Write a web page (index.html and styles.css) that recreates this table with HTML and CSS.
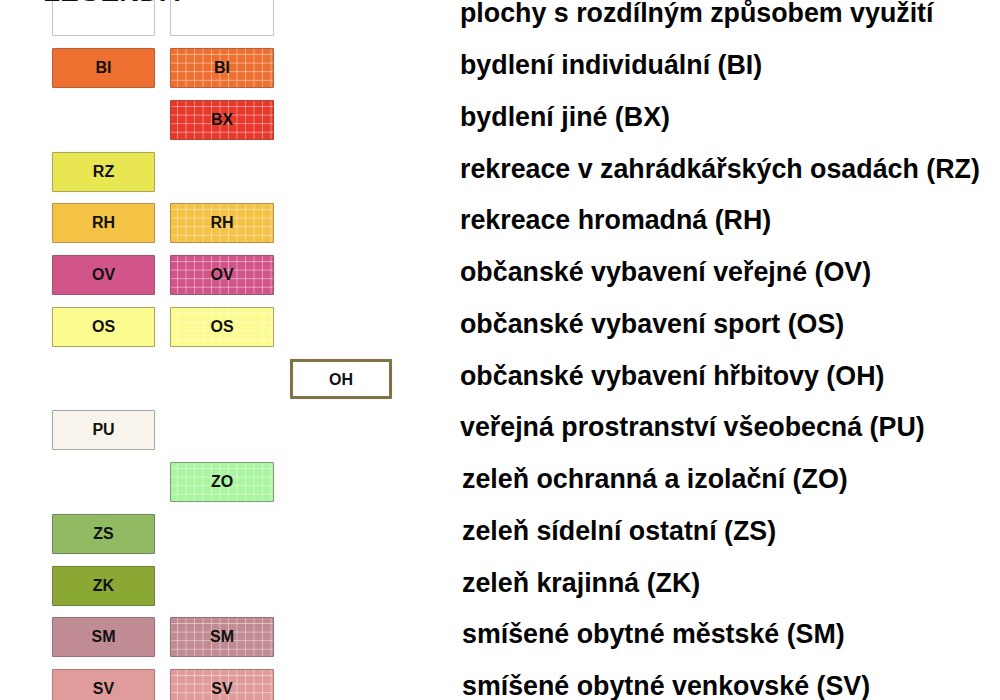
FILE: index.html
```html
<!DOCTYPE html>
<html lang="cs">
<head>
<meta charset="utf-8">
<title>Legenda</title>
<link rel="stylesheet" href="styles.css">
</head>
<body>
<div class="sheet">
  <div class="heading">LEGENDA</div>
  <div class="legend">
    <div class="row">
      <div class="cell"><div class="sw sw-blank"></div></div>
      <div class="cell"><div class="sw sw-blank"></div></div>
      <div class="cell"></div>
      <div class="label">plochy s rozdílným způsobem využití</div>
    </div>
    <div class="row">
      <div class="cell"><div class="sw bi">BI</div></div>
      <div class="cell"><div class="sw bi grid">BI</div></div>
      <div class="cell"></div>
      <div class="label">bydlení individuální (BI)</div>
    </div>
    <div class="row">
      <div class="cell"></div>
      <div class="cell"><div class="sw bx grid">BX</div></div>
      <div class="cell"></div>
      <div class="label">bydlení jiné (BX)</div>
    </div>
    <div class="row">
      <div class="cell"><div class="sw rz">RZ</div></div>
      <div class="cell"></div>
      <div class="cell"></div>
      <div class="label">rekreace v zahrádkářských osadách (RZ)</div>
    </div>
    <div class="row">
      <div class="cell"><div class="sw rh">RH</div></div>
      <div class="cell"><div class="sw rh grid">RH</div></div>
      <div class="cell"></div>
      <div class="label">rekreace hromadná (RH)</div>
    </div>
    <div class="row">
      <div class="cell"><div class="sw ov">OV</div></div>
      <div class="cell"><div class="sw ov grid">OV</div></div>
      <div class="cell"></div>
      <div class="label">občanské vybavení veřejné (OV)</div>
    </div>
    <div class="row">
      <div class="cell"><div class="sw os">OS</div></div>
      <div class="cell"><div class="sw os grid">OS</div></div>
      <div class="cell"></div>
      <div class="label">občanské vybavení sport (OS)</div>
    </div>
    <div class="row">
      <div class="cell"></div>
      <div class="cell"></div>
      <div class="cell"><div class="sw oh">OH</div></div>
      <div class="label">občanské vybavení hřbitovy (OH)</div>
    </div>
    <div class="row">
      <div class="cell"><div class="sw pu">PU</div></div>
      <div class="cell"></div>
      <div class="cell"></div>
      <div class="label">veřejná prostranství všeobecná (PU)</div>
    </div>
    <div class="row">
      <div class="cell"></div>
      <div class="cell"><div class="sw zo grid">ZO</div></div>
      <div class="cell"></div>
      <div class="label shift">zeleň ochranná a izolační (ZO)</div>
    </div>
    <div class="row">
      <div class="cell"><div class="sw zs">ZS</div></div>
      <div class="cell"></div>
      <div class="cell"></div>
      <div class="label shift">zeleň sídelní ostatní (ZS)</div>
    </div>
    <div class="row">
      <div class="cell"><div class="sw zk">ZK</div></div>
      <div class="cell"></div>
      <div class="cell"></div>
      <div class="label shift">zeleň krajinná (ZK)</div>
    </div>
    <div class="row">
      <div class="cell"><div class="sw sm">SM</div></div>
      <div class="cell"><div class="sw sm grid">SM</div></div>
      <div class="cell"></div>
      <div class="label shift">smíšené obytné městské (SM)</div>
    </div>
    <div class="row">
      <div class="cell"><div class="sw sv">SV</div></div>
      <div class="cell"><div class="sw sv grid">SV</div></div>
      <div class="cell"></div>
      <div class="label shift">smíšené obytné venkovské (SV)</div>
    </div>
  </div>
</div>
</body>
</html>
```

FILE: styles.css
```css
html, body {
  margin: 0;
  padding: 0;
  background: #ffffff;
  overflow: hidden;
}

body {
  width: 1000px;
  height: 700px;
  font-family: "Liberation Sans", Arial, sans-serif;
  color: #000;
}

.sheet {
  padding-left: 52px;
}

.heading {
  position: relative;
  z-index: 1;
  font-size: 28px;
  line-height: 28px;
  font-weight: bold;
  color: #111;
  margin: -22px 0 0 -9px;
  height: 28px;
}

.legend {
  display: flex;
  flex-direction: column;
  gap: 11.75px;
  margin-top: -9.75px;
}

.row {
  display: grid;
  grid-template-columns: 118px 120px 170px 1fr;
  align-items: center;
  height: 40px;
}

.cell {
  height: 40px;
}

.sw {
  box-sizing: border-box;
  width: 103px;
  height: 40px;
  border: 1px solid rgba(60, 40, 20, 0.35);
  border-radius: 1px;
  display: flex;
  align-items: center;
  justify-content: center;
  font-size: 16px;
  font-weight: bold;
  color: #111;
  box-shadow: 0 0 1px rgba(0, 0, 0, 0.25);
}

.cell:nth-child(2) .sw {
  width: 104px;
}

.cell:nth-child(3) .sw {
  width: 102px;
}

.grid {
  background-image:
    linear-gradient(to right, rgba(255, 255, 255, 0.42) 1px, transparent 1px),
    linear-gradient(to bottom, rgba(255, 255, 255, 0.42) 1px, transparent 1px);
  background-size: 8.5px 8.6px;
  background-position: 6px 5px;
}

.sw-blank {
  background-color: #ffffff;
  border: 1px solid #bcc3df;
  box-shadow: none;
}

.bi { background-color: #ee7031; border-color: #b4633d; }
.bx { background-color: #e8382b; border-color: #a9463c; }
.rz { background-color: #e8e651; border-color: #a9a55a; }
.rh { background-color: #f4c244; border-color: #b59549; }
.ov { background-color: #d2558a; border-color: #9d5575; }
.os { background-color: #fcfb8f; border-color: #aaa765; }
.pu { background-color: #f8f4eb; border-color: #a9a8a5; }
.zo { background-color: #aaf6a0; border-color: #7f9f7b; }
.zs { background-color: #91bb63; border-color: #6f8460; }
.zk { background-color: #8aa833; border-color: #6f7f42; }
.sm { background-color: #c18b93; border-color: #927379; }
.sv { background-color: #e09c9a; border-color: #a57f7d; }

.oh {
  background-color: #ffffff;
  border: 3px solid #7f7249;
  box-shadow: 0 0 1px rgba(0, 0, 0, 0.3);
  padding-top: 2px;
}

.label {
  font-size: 26.8px;
  font-weight: bold;
  line-height: 34px;
  padding-bottom: 6px;
  white-space: nowrap;
  color: #050505;
}

.shift {
  padding-left: 2px;
}
```
